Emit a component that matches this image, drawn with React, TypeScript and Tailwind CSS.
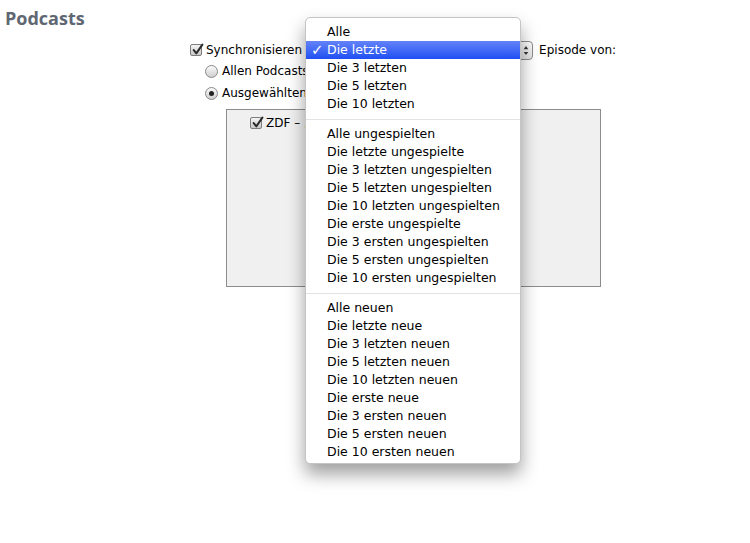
import React from "react";

const font = { fontFamily: '"DejaVu Sans", "Noto Sans", sans-serif' };

function Check({ className = "" }: { className?: string }) {
  return (
    <span className={"relative inline-block shrink-0 w-[12px] h-[12px] rounded-[2px] border border-[#7d7d7d] bg-gradient-to-b from-[#f4f4f4] to-[#c9c9c9] " + className}>
      <svg viewBox="0 0 12 12" className="absolute left-[0px] top-[-2px] w-[13px] h-[13px]">
        <path d="M2.5 6.5 L5 9.5 L10.5 1.5" fill="none" stroke="#2a2a2a" strokeWidth="1.9" strokeLinecap="round" strokeLinejoin="round" />
      </svg>
    </span>
  );
}

function Radio({ on }: { on?: boolean }) {
  return (
    <span className="relative shrink-0 inline-flex items-center justify-center w-[13px] h-[13px] rounded-full border border-[#8a8a8a] bg-gradient-to-b from-[#fafafa] to-[#cfcfcf]">
      {on && <span className="w-[5px] h-[5px] rounded-full bg-[#222]" />}
    </span>
  );
}

const groups = [
  ["Alle", "Die letzte", "Die 3 letzten", "Die 5 letzten", "Die 10 letzten"],
  [
    "Alle ungespielten",
    "Die letzte ungespielte",
    "Die 3 letzten ungespielten",
    "Die 5 letzten ungespielten",
    "Die 10 letzten ungespielten",
    "Die erste ungespielte",
    "Die 3 ersten ungespielten",
    "Die 5 ersten ungespielten",
    "Die 10 ersten ungespielten",
  ],
  [
    "Alle neuen",
    "Die letzte neue",
    "Die 3 letzten neuen",
    "Die 5 letzten neuen",
    "Die 10 letzten neuen",
    "Die erste neue",
    "Die 3 ersten neuen",
    "Die 5 ersten neuen",
    "Die 10 ersten neuen",
  ],
];

export default function App() {
  return (
    <div className="relative w-[750px] h-[543px] bg-white overflow-hidden text-black text-[12px]" style={font}>
      <div
        className="pl-[5px] pt-[7px] text-[18px] leading-[22px] font-bold text-[#5e6772]"
        style={{ fontFamily: '"Open Sans", "DejaVu Sans", sans-serif' }}
      >
        Podcasts
      </div>

      <div className="mt-[11px] flex items-center h-[20px] pl-[190px]">
        <Check />
        <span className="ml-[4px]">Synchronisieren</span>
        <span className="ml-[6px] w-[225px] h-[19px] rounded-[4px] border border-[#8d8d8d] bg-gradient-to-b from-[#ffffff] to-[#e2e2e2] flex items-center justify-end pr-[3px]">
          <svg viewBox="0 0 6 12" className="w-[6px] h-[11px]">
            <path d="M0.5 4.5 L3 1 L5.5 4.5 Z" fill="#333" />
            <path d="M0.5 7.5 L3 11 L5.5 7.5 Z" fill="#333" />
          </svg>
        </span>
        <span className="ml-[6px]">Episode von:</span>
      </div>

      <div className="mt-[3px] pl-[205px] flex flex-col gap-[6px]">
        <div className="flex items-center h-[16px] gap-[4px]">
          <Radio />
          <span className="whitespace-nowrap">Allen Podcasts</span>
        </div>
        <div className="flex items-center h-[16px] gap-[4px]">
          <Radio on />
          <span className="whitespace-nowrap">Ausgewählten Podcasts</span>
        </div>
      </div>

      <div className="mt-[8px] ml-[226px] w-[375px] h-[178px] border border-[#8c8c8c] bg-[#f0f0f0] pt-[6px] pl-[23px]">
        <div className="flex items-center gap-[4px] h-[14px]">
          <Check />
          <span className="whitespace-nowrap">ZDF – „Neues aus der Anstalt“</span>
        </div>
      </div>

      {/* Popup menu */}
      <div className="absolute left-[305px] top-[17px] w-[216px] rounded-[5px] bg-white border border-[#c4c4c4] shadow-[0_10px_18px_rgba(0,0,0,0.38)] pt-[5px] pb-[2px] text-[12.5px]">
        {groups.map((g, gi) => (
          <div key={gi}>
            {gi > 0 && (
              <div className="h-[12px] flex items-center">
                <div className="w-full h-[1px] bg-[#e3e3e3]" />
              </div>
            )}
            {g.map((t) => {
              const sel = t === "Die letzte";
              return (
                <div
                  key={t}
                  className={
                    "relative h-[18px] flex items-center pl-[21px] " +
                    (sel ? "bg-gradient-to-b from-[#6482f8] to-[#1f4ef2] text-white" : "")
                  }
                >
                  {sel && <span className="absolute left-[5px] top-[0px] text-[15px] leading-[18px] font-bold">✓</span>}
                  <span className={sel ? "font-medium" : ""}>{t}</span>
                </div>
              );
            })}
          </div>
        ))}
      </div>
    </div>
  );
}
